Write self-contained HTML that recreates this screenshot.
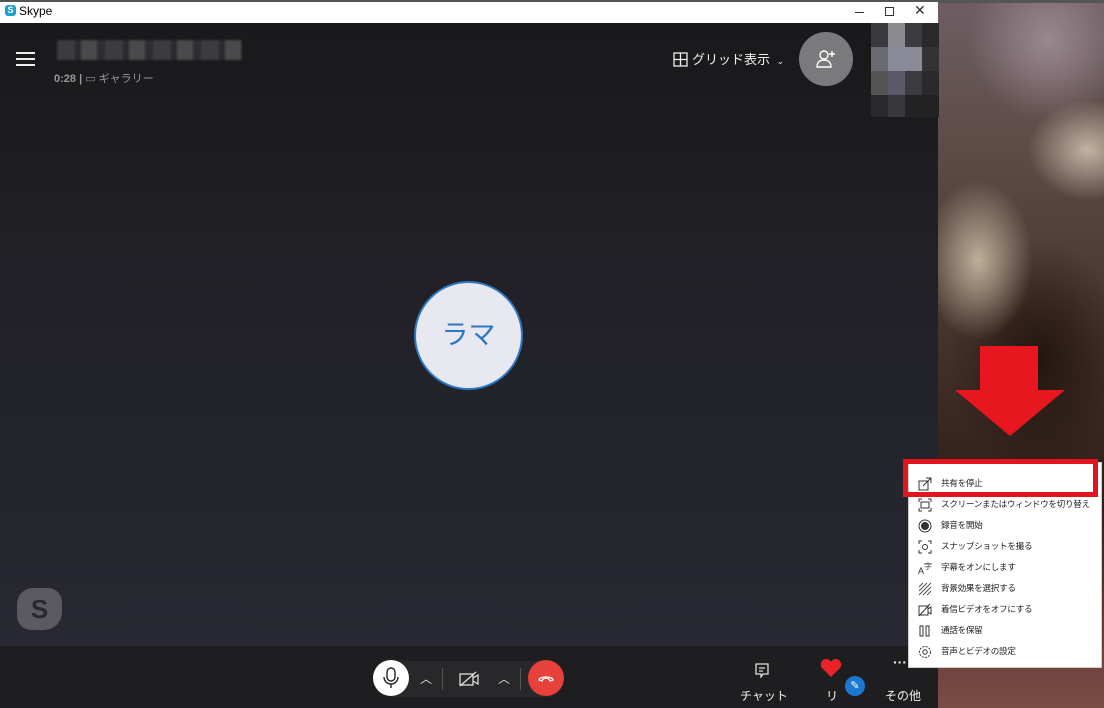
<!DOCTYPE html>
<html><head><meta charset="utf-8"><style>
*{margin:0;padding:0;box-sizing:border-box}
body{width:1104px;height:708px;overflow:hidden;position:relative;font-family:"Liberation Sans","Noto Sans CJK JP",sans-serif;background:#3a2a26}
.abs{position:absolute}
#photo{left:938px;top:0;width:166px;height:708px;background:
radial-gradient(ellipse 55px 80px at 40px 260px,#bfae98 0%,rgba(191,174,152,0) 100%),
radial-gradient(ellipse 60px 50px at 150px 150px,#c2b3a2 0%,rgba(194,179,162,0) 100%),
radial-gradient(ellipse 90px 120px at 100px 360px,#24160f 0%,rgba(36,22,15,0) 100%),
radial-gradient(ellipse 80px 80px at 110px 40px,#9a8890 0%,rgba(154,136,144,0) 100%),
linear-gradient(180deg,#6e5e64 0%,#5e4c48 20%,#44302a 50%,#2e1e1a 70%,#6a3e3a 90%,#7a4c46 100%)}
#top{left:0;top:0;width:1104px;height:3px;background:#555}
#title{left:0;top:2px;width:938px;height:21px;background:#fff;font-size:12px;color:#000}
#app{left:0;top:23px;width:938px;height:623px;background:linear-gradient(180deg,#19191b 0%,#1f1f24 30%,#282832 100%)}
#bar{left:0;top:646px;width:938px;height:62px;background:#1e1e20}
.menu{left:908px;top:462px;width:194px;height:206px;background:#fff;border:1px solid #ccc}
.mi{position:absolute;left:0;height:21px;width:192px;font-size:8.6px;color:#222;line-height:21px;white-space:nowrap;overflow:hidden}
.mi span{position:absolute;left:32px;letter-spacing:-0.3px}
.mi svg{position:absolute;left:9px;top:4px}
</style></head><body>
<div id="photo" class="abs"></div>
<div id="top" class="abs"></div>
<div id="title" class="abs">
 <div class="abs" style="left:5px;top:3px;width:11px;height:11px;border-radius:3px;background:#1aa0d8;color:#fff;font-size:9px;font-weight:bold;text-align:center;line-height:11px">S</div>
 <div class="abs" style="left:19px;top:2px">Skype</div>
 <div class="abs" style="left:855px;top:10px;width:9px;height:1px;background:#333"></div>
 <div class="abs" style="left:885px;top:5px;width:9px;height:9px;border:1px solid #333"></div>
 <div class="abs" style="left:914px;top:0px;font-size:14px;color:#333">✕</div>
</div>
<div id="app" class="abs">
 <div class="abs" style="left:16px;top:29px;width:19px;height:2px;background:#eee;box-shadow:0 6px 0 #eee,0 12px 0 #eee"></div>
 <div class="abs" style="left:57px;top:17px;width:185px;height:20px;background:repeating-linear-gradient(90deg,#3c3c3e 0 18px,#2a2a2c 18px 24px,#4a4a4c 24px 40px,#2e2e30 40px 48px);filter:blur(1px)"></div>
 <div class="abs" style="left:54px;top:47px;font-size:11px;color:#999"><b>0:28</b> <b>|</b> ▭ ギャラリー</div>
 <svg class="abs" style="left:673px;top:29px" width="15" height="15"><rect x="1" y="1" width="13" height="13" fill="none" stroke="#eee" stroke-width="1.3"/><path d="M7.5 1V14M1 7.5H14" stroke="#eee" stroke-width="1.3"/></svg>
 <div class="abs" style="left:692px;top:26px;font-size:13px;color:#eee">グリッド表示 <span style="font-size:9px;margin-left:3px">⌄</span></div>
 <div class="abs" style="left:799px;top:9px;width:54px;height:54px;border-radius:50%;background:#7a7a7c"></div>
 <svg class="abs" style="left:815px;top:25px" width="22" height="22"><circle cx="9" cy="7" r="4" fill="none" stroke="#fff" stroke-width="1.4"/><path d="M2 19c0-5 3-7 7-7s7 2 7 7z" fill="none" stroke="#fff" stroke-width="1.4"/><path d="M17 3v6M14 6h6" stroke="#fff" stroke-width="1.4"/></svg>
 <div class="abs" style="left:871px;top:0;width:68px;height:94px;background:
 linear-gradient(90deg,#3a3a3e 0 17px,#8a8a90 17px 34px,#3c3c40 34px 51px,#2a2a2c 51px)"></div>
 <div class="abs" style="left:871px;top:24px;width:68px;height:24px;background:linear-gradient(90deg,#6a6a72 0 17px,#8a8a98 17px 51px,#333 51px)"></div>
 <div class="abs" style="left:871px;top:48px;width:68px;height:24px;background:linear-gradient(90deg,#555 0 17px,#5a5a6a 17px 34px,#3a3a40 34px 51px,#2a2a2c 51px)"></div>
 <div class="abs" style="left:871px;top:72px;width:68px;height:22px;background:linear-gradient(90deg,#2a2a2c 0 17px,#38383c 17px 34px,#222 34px)"></div>
 <div class="abs" style="left:414px;top:258px;width:109px;height:109px;border-radius:50%;background:#e8e8f0;border:2px solid #2b78c2;color:#2b78c2;font-size:27px;text-align:center;line-height:104px">ラマ</div>
 <div class="abs" style="left:17px;top:565px;width:45px;height:42px;border-radius:16px 14px 18px 14px;background:#5a5a60;color:#28282e;font-size:26px;font-weight:bold;text-align:center;line-height:42px">S</div>
</div>
<div id="bar" class="abs">
 <div class="abs" style="left:374px;top:15px;width:190px;height:36px;background:#28282a;border-radius:18px"></div>
 <div class="abs" style="left:373px;top:14px;width:36px;height:36px;border-radius:50%;background:#fff"></div>
 <svg class="abs" style="left:382px;top:21px" width="18" height="22"><rect x="5" y="1" width="8" height="13" rx="4" fill="none" stroke="#222" stroke-width="1.4"/><path d="M2 10a7 7 0 0 0 14 0M9 17v4" fill="none" stroke="#222" stroke-width="1.4"/></svg>
 <div class="abs" style="left:420px;top:24px;color:#ddd;font-size:12px">︿</div>
 <div class="abs" style="left:442px;top:22px;width:1px;height:22px;background:#555"></div>
 <svg class="abs" style="left:459px;top:25px" width="22" height="16"><rect x="1" y="3" width="13" height="11" fill="none" stroke="#ddd" stroke-width="1.3"/><path d="M14 7l5-3v9l-5-3M1 15L17 1" fill="none" stroke="#ddd" stroke-width="1.3"/></svg>
 <div class="abs" style="left:498px;top:24px;color:#ddd;font-size:12px">︿</div>
 <div class="abs" style="left:520px;top:22px;width:1px;height:22px;background:#555"></div>
 <div class="abs" style="left:528px;top:14px;width:36px;height:36px;border-radius:50%;background:#e8413b"></div>
 <svg class="abs" style="left:537px;top:27px" width="18" height="10"><path d="M2 7c0-4 14-4 14 0l-3 1-1-2c-2-1-4-1-6 0l-1 2z" fill="none" stroke="#fff" stroke-width="1.3"/></svg>
 <svg class="abs" style="left:754px;top:16px" width="16" height="16"><path d="M2 2h12v10H9l-2 3v-3H2z" fill="none" stroke="#ddd" stroke-width="1.3"/><path d="M5 6h6M5 9h4" stroke="#ddd" stroke-width="1.2"/></svg>
 <div class="abs" style="left:740px;top:41px;font-size:12px;color:#eee">チャット</div>
 <svg class="abs" style="left:820px;top:12px" width="22" height="20"><path d="M11 19L2 10C-1 6 2 1 6 1c2 0 4 1 5 3c1-2 3-3 5-3c4 0 7 5 4 9z" fill="#e8242a"/></svg>
 <div class="abs" style="left:826px;top:41px;font-size:12px;color:#eee">リ</div>
 <div class="abs" style="left:845px;top:30px;width:20px;height:20px;border-radius:50%;background:#1b78d0;color:#fff;font-size:11px;text-align:center;line-height:20px">✎</div>
 <div class="abs" style="left:893px;top:8px;font-size:14px;color:#eee;font-weight:bold">···</div>
 <div class="abs" style="left:885px;top:41px;font-size:12px;color:#eee">その他</div>
</div>
<div class="menu abs">
 <div class="mi" style="top:10px"><svg width="14" height="14"><rect x="1" y="4" width="9" height="9" fill="none" stroke="#333"/><path d="M5 9L13 1M8 1h5v5" fill="none" stroke="#333"/></svg><span>共有を停止</span></div>
 <div class="mi" style="top:31px"><svg width="14" height="14"><path d="M1 4V1h3M10 1h3v3M13 10v3h-3M4 13H1v-3" fill="none" stroke="#333"/><rect x="3" y="4" width="8" height="6" fill="none" stroke="#333"/></svg><span>スクリーンまたはウィンドウを切り替え</span></div>
 <div class="mi" style="top:52px"><svg width="14" height="14"><circle cx="7" cy="7" r="6" fill="none" stroke="#333"/><circle cx="7" cy="7" r="4" fill="#333"/></svg><span>録音を開始</span></div>
 <div class="mi" style="top:73px"><svg width="14" height="14"><path d="M1 4V1h3M10 1h3v3M13 10v3h-3M4 13H1v-3" fill="none" stroke="#333"/><circle cx="7" cy="7" r="2.5" fill="none" stroke="#333"/></svg><span>スナップショットを撮る</span></div>
 <div class="mi" style="top:94px"><svg width="14" height="14"><text x="0" y="13" font-size="9" fill="#333">A</text><text x="6" y="8" font-size="8" fill="#333">字</text></svg><span>字幕をオンにします</span></div>
 <div class="mi" style="top:115px"><svg width="14" height="14"><path d="M1 5L5 1M1 9L9 1M1 13L13 1M5 13L13 5M9 13l4-4" stroke="#555"/></svg><span>背景効果を選択する</span></div>
 <div class="mi" style="top:136px"><svg width="14" height="14"><rect x="1" y="3" width="9" height="9" fill="none" stroke="#333"/><path d="M10 6l3-2v7l-3-2M1 13L12 1" fill="none" stroke="#333"/></svg><span>着信ビデオをオフにする</span></div>
 <div class="mi" style="top:157px"><svg width="14" height="14"><rect x="2" y="2" width="3" height="10" fill="none" stroke="#333"/><rect x="8" y="2" width="3" height="10" fill="none" stroke="#333"/></svg><span>通話を保留</span></div>
 <div class="mi" style="top:178px"><svg width="14" height="14"><circle cx="7" cy="7" r="5.5" fill="none" stroke="#333" stroke-dasharray="2 1.3"/><circle cx="7" cy="7" r="2.2" fill="none" stroke="#333"/></svg><span>音声とビデオの設定</span></div>
</div>
<div class="abs" style="left:903px;top:459px;width:195px;height:38px;border:5px solid #e4141e"></div>
<svg class="abs" style="left:950px;top:340px" width="120" height="100"><path d="M30 6H88V50H115L60 96L5 50H30Z" fill="#e8161f"/></svg>
</body></html>
